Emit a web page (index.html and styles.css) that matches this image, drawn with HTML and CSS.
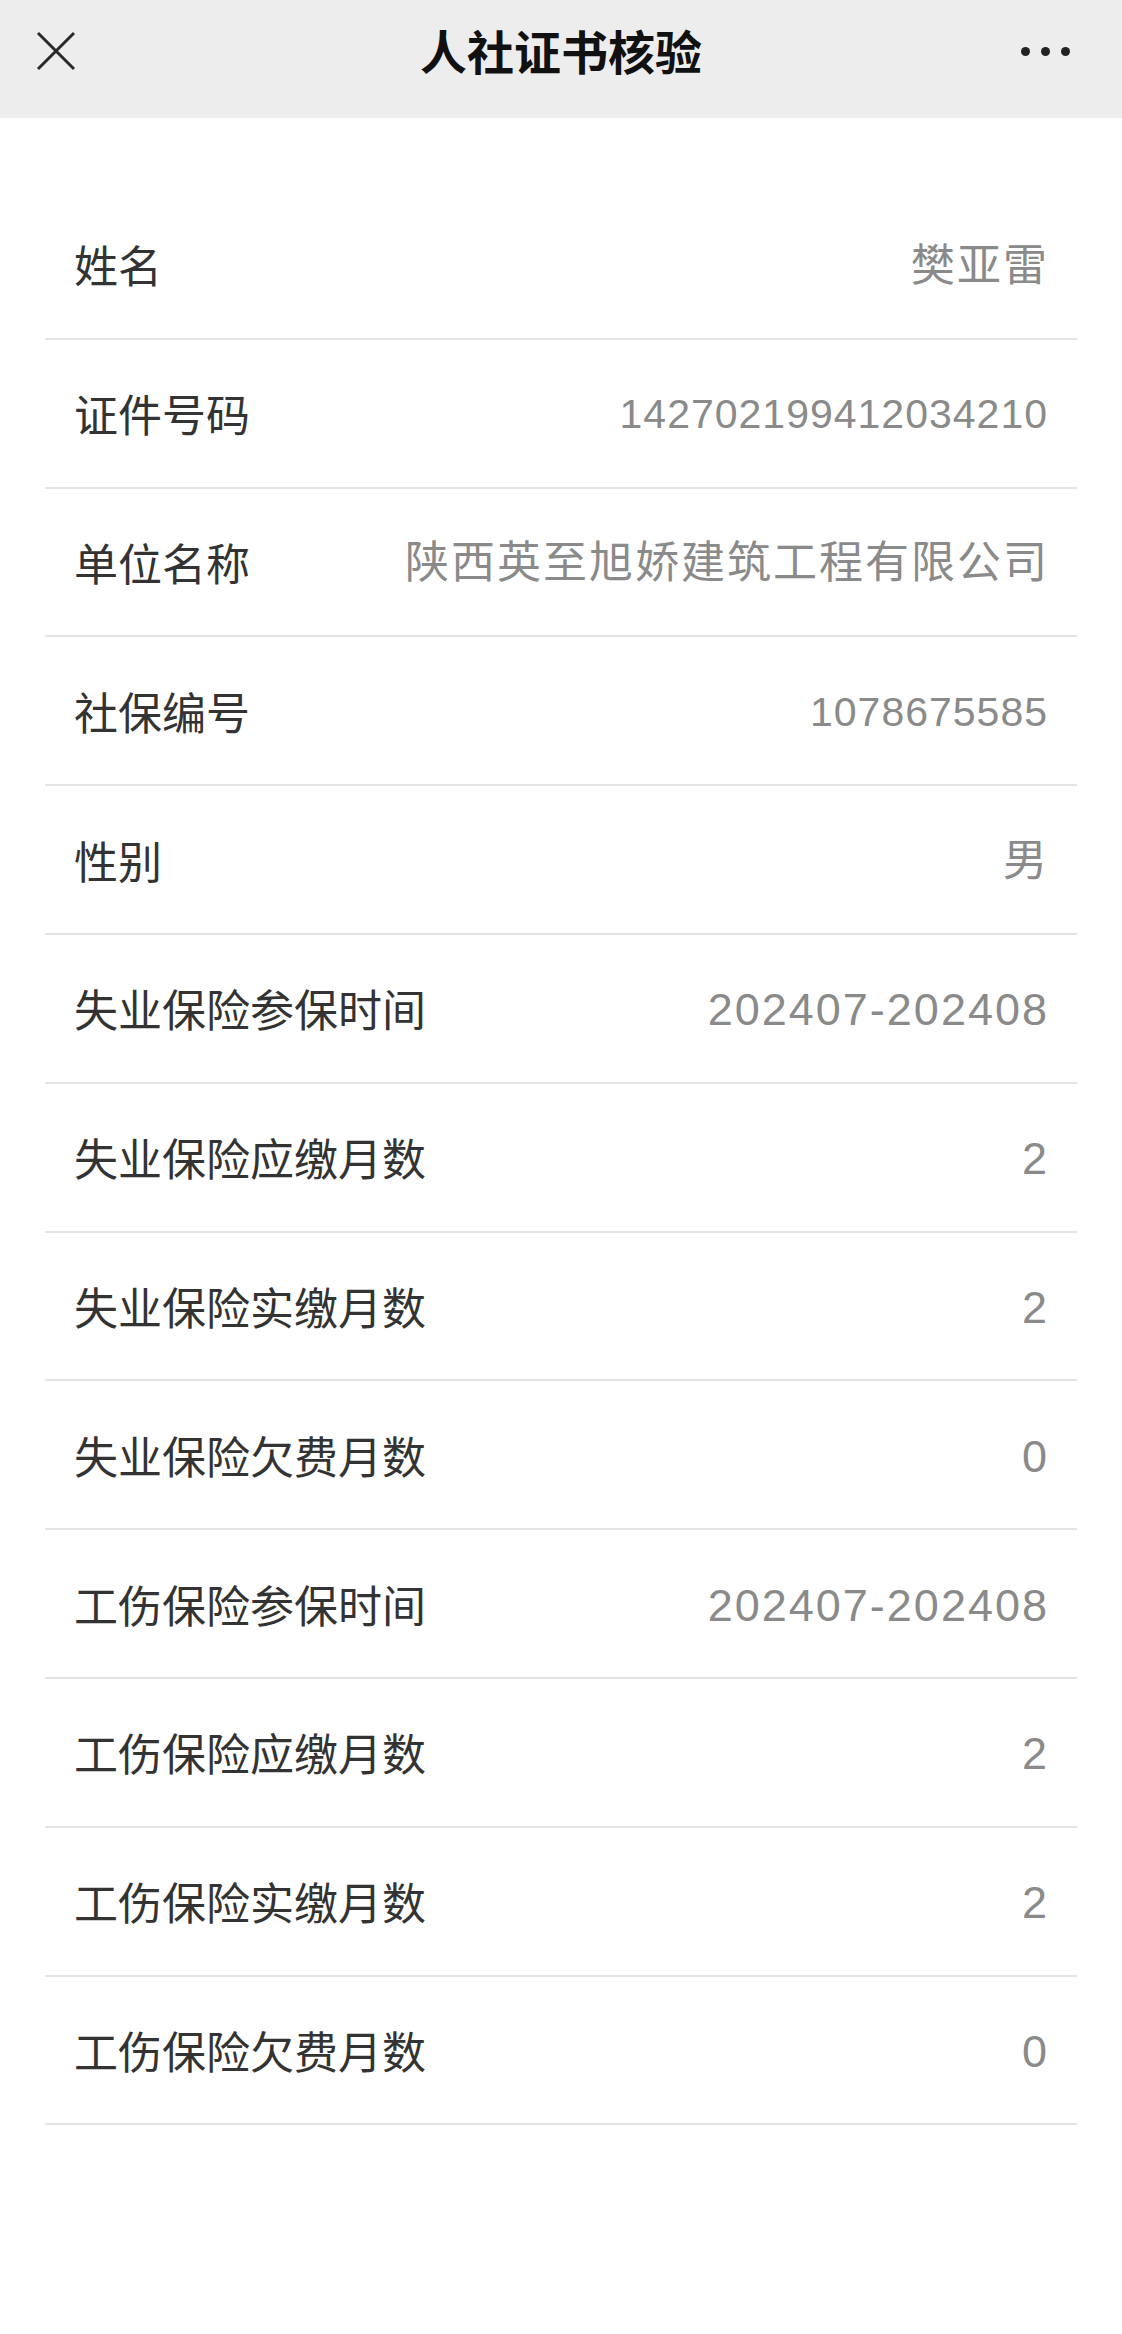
FILE: index.html
```html
<!DOCTYPE html>
<html lang="zh-CN">
<head>
<meta charset="utf-8">
<title>人社证书核验</title>
<link rel="stylesheet" href="styles.css">
</head>
<body>
<header class="topbar">
  <div class="close">
    <svg viewBox="0 0 40 40" width="40" height="40"><path d="M2 2 L38 38 M38 2 L2 38" stroke="#2a2a2a" stroke-width="3" fill="none" stroke-linecap="butt"/></svg>
  </div>
  <h1 class="title">人社证书核验</h1>
  <div class="more"><span></span><span></span><span></span></div>
</header>
<main class="list">
  <div class="row"><span class="label">姓名</span><span class="value">樊亚雷</span></div>
  <div class="row"><span class="label">证件号码</span><span class="value num-sm">142702199412034210</span></div>
  <div class="row"><span class="label">单位名称</span><span class="value">陕西英至旭娇建筑工程有限公司</span></div>
  <div class="row"><span class="label">社保编号</span><span class="value num-sm">1078675585</span></div>
  <div class="row"><span class="label">性别</span><span class="value">男</span></div>
  <div class="row"><span class="label">失业保险参保时间</span><span class="value num">202407-202408</span></div>
  <div class="row"><span class="label">失业保险应缴月数</span><span class="value num">2</span></div>
  <div class="row"><span class="label">失业保险实缴月数</span><span class="value num">2</span></div>
  <div class="row"><span class="label">失业保险欠费月数</span><span class="value num">0</span></div>
  <div class="row"><span class="label">工伤保险参保时间</span><span class="value num">202407-202408</span></div>
  <div class="row"><span class="label">工伤保险应缴月数</span><span class="value num">2</span></div>
  <div class="row"><span class="label">工伤保险实缴月数</span><span class="value num">2</span></div>
  <div class="row"><span class="label">工伤保险欠费月数</span><span class="value num">0</span></div>
</main>
</body>
</html>
```
FILE: styles.css
```css
html, body {
  margin: 0;
  padding: 0;
  background: #ffffff;
}
body {
  font-family: "Noto Sans CJK SC", "Noto Sans", sans-serif;
  width: 1122px;
  min-height: 2334px;
}
.topbar {
  height: 118px;
  background: #ededed;
  display: flex;
  align-items: center;
  justify-content: space-between;
  padding: 0 52px 0 36px;
  box-sizing: border-box;
  position: relative;
}
.close {
  width: 40px;
  height: 40px;
  margin-top: -16px;
}
.close svg { display: block; }
.title {
  position: absolute;
  left: 0;
  right: 0;
  top: 20px;
  margin: 0;
  text-align: center;
  font-size: 47px;
  line-height: 60px;
  font-weight: 700;
  color: #111;
  pointer-events: none;
}
.more {
  display: flex;
  gap: 11px;
  margin-top: -15px;
}
.more span {
  width: 9px;
  height: 9px;
  border-radius: 50%;
  background: #222;
}
.list {
  margin: 73px 45px 0;
}
.row {
  height: 148.8px;
  box-sizing: border-box;
  border-bottom: 2px solid #e4e4e4;
  display: flex;
  align-items: center;
  justify-content: space-between;
  padding: 0 30px 0 29px;
}
.label {
  font-size: 44px;
  line-height: 1;
  color: #333;
}
.value {
  font-family: "Liberation Sans", "Noto Sans CJK SC", sans-serif;
  font-size: 44px;
  line-height: 1;
  color: #8a8a8a;
  letter-spacing: 2px;
  margin-right: -2px;
  padding-top: 3px;
}
.num {
  font-size: 45px;
  letter-spacing: 2px;
}
.num-sm {
  font-size: 41px;
  letter-spacing: 1px;
  margin-right: -1px;
}
```
